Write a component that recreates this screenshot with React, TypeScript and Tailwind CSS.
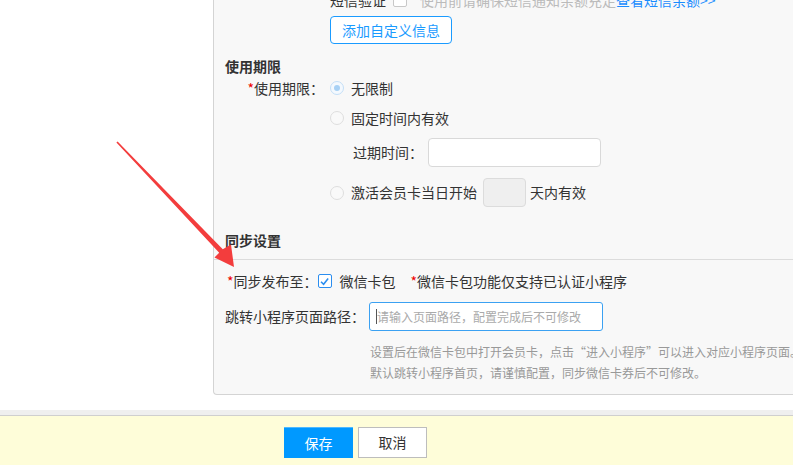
import React from "react";

function Radio({ checked = false }: { checked?: boolean }) {
  return (
    <span
      className={`flex h-[14px] w-[14px] shrink-0 items-center justify-center rounded-full border ${
        checked ? "border-[#c4dff7] bg-[#f4f9fe]" : "border-[#dedede] bg-[#f9f9f9]"
      }`}
    >
      {checked && <span className="h-[6px] w-[6px] rounded-full bg-[#a8d1f5]" />}
    </span>
  );
}

function CheckBox({ checked = false }: { checked?: boolean }) {
  return (
    <span
      className={`flex h-[14px] w-[14px] shrink-0 items-center justify-center rounded-[2px] border bg-white ${
        checked ? "border-[#2b8ef0]" : "border-[#c8c8c8]"
      }`}
    >
      {checked && (
        <svg viewBox="0 0 12 12" className="h-[11px] w-[11px]">
          <path d="M2.2 6.2 L5 9 L10 2.8" fill="none" stroke="#2b8ef0" strokeWidth="1.7" />
        </svg>
      )}
    </span>
  );
}

function Req() {
  return <span className="text-[#e00]">*</span>;
}

export default function App() {
  return (
    <div className="relative h-[465px] w-[793px] overflow-hidden bg-white font-['Noto_Sans_CJK_SC','Microsoft_YaHei',sans-serif] text-[14px] text-[#333]">
      <div className="flex h-[410px]">
        <div className="w-[213px] shrink-0" />
        <div className="flex h-[395px] flex-1 flex-col rounded-bl-[4px] border-b border-l border-[#d4d4d4] bg-[#f8f8f8]">
          {/* sms row, cut off at the top */}
          <div className="-mt-[10px] ml-[116px] flex h-[20px] items-center whitespace-nowrap">
            <span>短信验证</span>
            <span className="ml-[7px]">
              <CheckBox />
            </span>
            <span className="ml-[13px] text-[#bbb]">使用前请确保短信通知余额充足</span>
            <span className="text-[#1a8cff]">查看短信余额&gt;&gt;</span>
          </div>
          <div className="ml-[116px] mt-[6px] flex">
            <button className="h-[28px] w-[122px] rounded-[4px] border border-[#1a9bff] bg-white text-[14px] text-[#1a9bff]">
              添加自定义信息
            </button>
          </div>

          <div className="ml-[11px] mt-[12px] flex h-[20px] items-center font-bold">使用期限</div>

          <div className="mt-[2px] flex h-[20px] items-center">
            <span className="w-[110px] text-right">
              <Req />
              使用期限：
            </span>
            <span className="ml-[6px]">
              <Radio checked />
            </span>
            <span className="ml-[7px]">无限制</span>
          </div>
          <div className="ml-[116px] mt-[10px] flex h-[20px] items-center">
            <Radio />
            <span className="ml-[7px]">固定时间内有效</span>
          </div>
          <div className="ml-[139px] mt-[10px] flex h-[29px] items-center">
            <span>过期时间：</span>
            <div className="ml-[5px] h-[29px] w-[173px] rounded-[4px] border border-[#d9d9d9] bg-white" />
          </div>
          <div className="ml-[116px] mt-[11px] flex h-[29px] items-center">
            <Radio />
            <span className="ml-[7px]">激活会员卡当日开始</span>
            <div className="ml-[6px] h-[29px] w-[43px] rounded-[4px] border border-[#dcdcdc] bg-[#efefef]" />
            <span className="ml-[4px]">天内有效</span>
          </div>

          <div className="ml-[11px] mt-[23px] flex h-[20px] items-center font-bold">同步设置</div>
          <div className="mt-[9px] h-px bg-[#dcdcdc]" />

          <div className="ml-[13px] mt-[11px] flex h-[20px] items-center whitespace-nowrap">
            <Req />
            <span>同步发布至：</span>
            <CheckBox checked />
            <span className="ml-[8px]">微信卡包</span>
            <span className="ml-[15px]">
              <Req />
              微信卡包功能仅支持已认证小程序
            </span>
          </div>
          <div className="ml-[11px] mt-[11px] flex h-[29px] items-center">
            <span>跳转小程序页面路径：</span>
            <div className="ml-[4px] flex h-[29px] w-[234px] items-center rounded-[3px] border border-[#3ba1f2] bg-white pl-[6px]">
              <span className="h-[15px] w-px bg-[#555]" />
              <span className="text-[12px] text-[#aaa]">请输入页面路径，配置完成后不可修改</span>
            </div>
          </div>
          <div className="ml-[156px] mt-[10px] whitespace-nowrap text-[12px] leading-[21px] text-[#999]">
            <div>设置后在微信卡包中打开会员卡，点击“进入小程序”可以进入对应小程序页面。</div>
            <div>默认跳转小程序首页，请谨慎配置，同步微信卡券后不可修改。</div>
          </div>
        </div>
      </div>
      <div className="h-[6px] border-b border-[#cfcfcf] bg-[#efefef]" />
      <div className="flex h-[49px] gap-[5px] bg-[#fefdd9] pl-[284px] pt-[11px]">
        <button className="h-[31px] w-[69px] border-t border-[#4db8ff] bg-[#0099ff] text-[14px] text-white">
          保存
        </button>
        <button className="h-[31px] w-[69px] border border-[#bdbdbd] bg-white text-[14px] text-[#333]">
          取消
        </button>
      </div>

      <svg className="pointer-events-none absolute left-0 top-0" width="793" height="465">
        <polygon
          points="117.6,141.5 222.8,249.3 231,244.5 234,267 214.5,257.5 219.2,252.7 116.4,142.5"
          fill="#f33d3d"
        />
      </svg>
    </div>
  );
}
